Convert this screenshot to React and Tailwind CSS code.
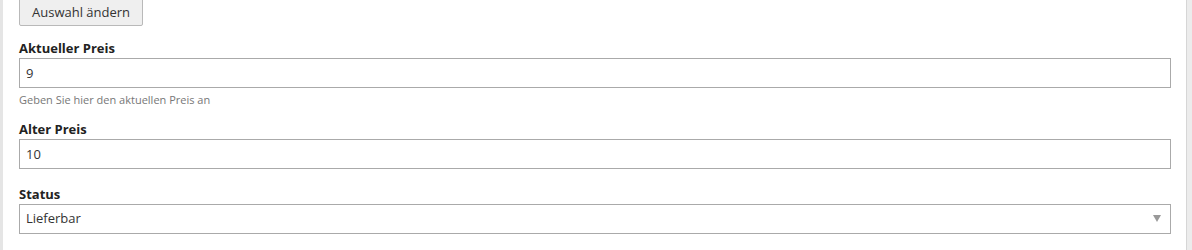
export default function App() {
  const font = { fontFamily: '"Open Sans", "Noto Sans", sans-serif' };
  return (
    <div className="flex h-[250px] w-[1192px] bg-white text-[#1d1d1d]" style={font}>
      <div className="w-[3px] shrink-0 bg-[#e5e5e5]" />
      <div className="flex-1 pl-4 pr-[15px] pt-0">
        <button className="-mt-[4px] block h-[30px] rounded-[2px] border border-[#b9b9b9] bg-[#efefef] px-[12px] pt-[3px] text-[13px] leading-none text-[#333]">
          Auswahl ändern
        </button>

        <div className="mt-[13px]">
          <label className="block text-[13px] font-bold leading-[18px] text-[#222]">Aktueller Preis</label>
          <input
            readOnly
            value="9"
            className="mt-[1px] block h-[30px] w-full border border-[#aaa] bg-white px-[6px] text-[13px] text-[#333] outline-none"
          />
          <p className="mt-[4px] text-[11px] leading-[15px] text-[#777]">Geben Sie hier den aktuellen Preis an</p>
        </div>

        <div className="mt-[13px]">
          <label className="block text-[13px] font-bold leading-[18px] text-[#222]">Alter Preis</label>
          <input
            readOnly
            value="10"
            className="mt-[1px] block h-[30px] w-full border border-[#aaa] bg-white px-[6px] text-[13px] text-[#333] outline-none"
          />
        </div>

        <div className="mt-[16px]">
          <label className="block text-[13px] font-bold leading-[18px] text-[#222]">Status</label>
          <div className="relative mt-[1px] flex h-[30px] w-full items-center border border-[#aaa] bg-white px-[6px] text-[13px] text-[#333]">
            <span>Lieferbar</span>
            <span className="absolute right-[9px] top-[10px] h-0 w-0 border-x-[4px] border-t-[7px] border-x-transparent border-t-[#999]" />
          </div>
        </div>
      </div>
      <div className="w-[6px] shrink-0 border-l border-[#d6d6d6] bg-[#ececec]" />
    </div>
  );
}
